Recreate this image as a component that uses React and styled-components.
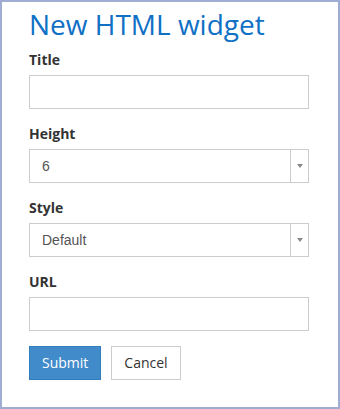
import React from "react";
import styled, { createGlobalStyle } from "styled-components";

const Global = createGlobalStyle`
  html, body { margin: 0; padding: 0; background: #fff; }
  body { font-family: "Open Sans", sans-serif; font-size: 14px; color: #333; }
  * { box-sizing: border-box; }
`;

const Frame = styled.div`
  width: 340px;
  height: 409px;
  border: 2px solid #9fadd2;
  padding: 7px 29px 0 27px;
  background: #fff;
`;

const Heading = styled.h1`
  margin: 0 0 10px 0;
  font-family: "Open Sans", sans-serif;
  font-weight: 400;
  font-size: 28px;
  line-height: 1.1;
  color: #0f70c5;
`;

const Group = styled.div`
  display: flex;
  flex-direction: column;
  margin-bottom: 15px;
`;

const Label = styled.label`
  font-family: "Open Sans", sans-serif;
  font-weight: 700;
  font-size: 14px;
  line-height: 20px;
  color: #333;
  margin-bottom: 5px;
`;

const Input = styled.input`
  display: block;
  width: 280px;
  height: 34px;
  margin: 0;
  border: 1px solid #ccc;
  background: #fff;
  padding: 6px 12px;
  font-family: "Liberation Sans", Arial, sans-serif;
  font-size: 14px;
  outline: none;
`;

const SelectBox = styled.div`
  display: flex;
  width: 280px;
  height: 34px;
  border: 1px solid #ccc;
  background: #fff;
`;

const SelectValue = styled.div`
  flex: 1;
  display: flex;
  align-items: center;
  padding-left: 12px;
  font-family: "Liberation Sans", Arial, sans-serif;
  font-size: 14px;
  color: #555;
`;

const Arrow = styled.div`
  width: 18px;
  border-left: 1px solid #ccc;
  display: flex;
  align-items: center;
  justify-content: center;
  &::after {
    content: "";
    display: block;
    width: 0;
    height: 0;
    border-left: 3px solid transparent;
    border-right: 3px solid transparent;
    border-top: 4px solid #888;
  }
`;

const Actions = styled.div`
  display: flex;
  gap: 10px;
`;

const Button = styled.button`
  height: 34px;
  margin: 0;
  padding: 0 12px;
  font-family: "Open Sans", sans-serif;
  font-size: 14px;
  line-height: 20px;
  border: 1px solid ${(p) => (p.$primary ? "#357ebd" : "#ccc")};
  background: ${(p) => (p.$primary ? "#428bca" : "#fff")};
  color: ${(p) => (p.$primary ? "#fff" : "#333")};
  border-radius: 0;
  width: ${(p) => p.$w}px;
`;

export default function App() {
  return (
    <>
      <Global />
      <Frame>
        <Heading>New HTML widget</Heading>
        <Group>
          <Label>Title</Label>
          <Input type="text" />
        </Group>
        <Group>
          <Label>Height</Label>
          <SelectBox>
            <SelectValue>6</SelectValue>
            <Arrow />
          </SelectBox>
        </Group>
        <Group>
          <Label>Style</Label>
          <SelectBox>
            <SelectValue>Default</SelectValue>
            <Arrow />
          </SelectBox>
        </Group>
        <Group>
          <Label>URL</Label>
          <Input type="text" />
        </Group>
        <Actions>
          <Button $primary $w={72}>Submit</Button>
          <Button $w={70}>Cancel</Button>
        </Actions>
      </Frame>
    </>
  );
}
